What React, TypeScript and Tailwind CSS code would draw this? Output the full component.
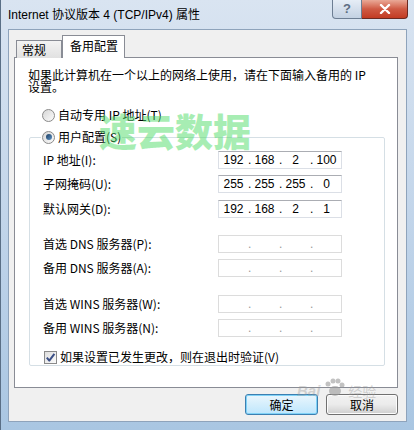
import React from 'react';

const FONT = { fontFamily: '"Liberation Sans", "Noto Sans CJK SC", sans-serif' };
const CJK = { fontFamily: '"Noto Sans CJK SC", "Liberation Sans", sans-serif' };

const rows = [
  { label: 'IP 地址(I):', ip: ['192', '168', '2', '100'], mt: 'mt-[7px]' },
  { label: '子网掩码(U):', ip: ['255', '255', '255', '0'], mt: 'mt-[6px]' },
  { label: '默认网关(D):', ip: ['192', '168', '2', '1'], mt: 'mt-[7px]' },
  { label: '首选 DNS 服务器(P):', ip: null, mt: 'mt-[17px]' },
  { label: '备用 DNS 服务器(A):', ip: null, mt: 'mt-[6px]' },
  { label: '首选 WINS 服务器(W):', ip: null, mt: 'mt-[18px]' },
  { label: '备用 WINS 服务器(N):', ip: null, mt: 'mt-[6px]' },
];

function Radio({ on }: { on?: boolean }) {
  return (
    <span className="w-[13px] h-[13px] rounded-full border border-[#8a8a8a] bg-gradient-to-br from-[#d6d6d6] to-[#fbfbfb] flex items-center justify-center flex-shrink-0">
      {on && <span className="w-[6px] h-[6px] rounded-full bg-gradient-to-br from-[#1d3f63] to-[#5e93c6]" />}
    </span>
  );
}

function IpBox({ ip }: { ip: string[] | null }) {
  const parts = ip ?? ['', '', '', ''];
  return (
    <div
      className={`w-[124px] h-[18px] flex items-center bg-white border ${ip ? 'border-[#dbdfe6] border-t-[#abadb3] text-black' : 'border-[#dcdcdc] text-[#9a9a9a]'} text-[12px] leading-none`}
      style={FONT}
    >
      {parts.map((p, i) => (
        <React.Fragment key={i}>
          <span className="w-[29px] text-center">{p}</span>
          {i < 3 && <span className="w-[2px] text-center">.</span>}
        </React.Fragment>
      ))}
    </div>
  );
}

export default function App() {
  return (
    <div className="relative w-[414px] h-[430px] overflow-hidden bg-gradient-to-b from-[#d9e4f1] via-[#c2d5ea] to-[#a9c6e2] border-l border-[#5a6f86]" style={FONT}>
      {/* title bar */}
      <div className="h-[29px] flex items-start">
        <p className="pl-[7px] pt-[7px] text-[12px] text-black leading-[16px]">Internet 协议版本 4 (TCP/IPv4) 属性</p>
        <div className="ml-auto mr-[6px] flex">
          <div className="w-[30px] h-[19px] rounded-bl-[4px] border border-t-0 border-[#6d7e93] bg-gradient-to-b from-[#e6edf6] to-[#c3d1e2] flex items-center justify-center text-[13px] font-bold text-[#5d6d82]">?</div>
          <div className="w-[46px] h-[19px] rounded-br-[4px] border border-l-0 border-t-0 border-[#6b2a22] bg-gradient-to-b from-[#e9a997] via-[#cf5a44] to-[#c23b22] flex items-center justify-center">
            <svg width="12" height="10" viewBox="0 0 12 10">
              <path d="M2 1 L10 9 M10 1 L2 9" stroke="white" strokeWidth="2.4" strokeLinecap="round" />
            </svg>
          </div>
        </div>
      </div>

      {/* dialog body */}
      <div className="ml-[7px] w-[399px] h-[393px] bg-[#f0f0f0] border border-[#8ea3bb]">
        {/* tabs */}
        <div className="flex items-end h-[27px] pl-[7px]">
          <div className="w-[46px] h-[18px] border border-b-0 border-[#898c95] bg-gradient-to-b from-[#f3f3f3] to-[#e1e1e1] text-[12px] leading-[18px] pl-[5px] mb-[-1px]" style={CJK}>常规</div>
          <div className="relative z-10 w-[63px] h-[23px] border border-b-0 border-[#898c95] bg-white text-[12px] leading-[20px] pl-[7px] mb-[-1px]" style={CJK}>备用配置</div>
        </div>

        {/* panel */}
        <div className="ml-[5px] w-[384px] h-[331px] border border-[#898c95] bg-white text-[12px] text-black" style={CJK}>
          <p className="ml-[13px] mt-[11px] leading-[12px]">
            如果此计算机在一个以上的网络上使用，请在下面输入备用的 IP<br />设置。
          </p>

          <div className="ml-[27px] mt-[15px] h-[14px] flex items-center gap-[3px]">
            <Radio />
            <span>自动专用 IP 地址(T)</span>
          </div>

          <fieldset className="ml-[14px] mt-[8px] w-[356px] h-[236px] border border-[#d5dfe5] rounded-[2px]">
            <legend className="ml-[11px] px-[1px] h-[14px]">
              <span className="flex items-center gap-[3px] h-[14px] bg-white">
                <Radio on />
                <span>用户配置(S)</span>
              </span>
            </legend>
            {rows.map((r) => (
              <div key={r.label} className={`${r.mt} flex items-center h-[18px] pl-[13px]`}>
                <span className="w-[175px] whitespace-nowrap">{r.label}</span>
                <IpBox ip={r.ip} />
              </div>
            ))}
            <div className="mt-[13px] flex items-center h-[14px] pl-[14px] gap-[3px]">
              <span className="w-[13px] h-[13px] border border-[#8a8a8a] bg-gradient-to-br from-[#dedede] to-[#fbfbfb] flex items-center justify-center flex-shrink-0">
                <svg width="11" height="11" viewBox="0 0 11 11">
                  <path d="M1.8 5.6 L4.3 8.6 L9.4 1.8" stroke="#3b4f86" strokeWidth="2" fill="none" strokeLinejoin="round" />
                </svg>
              </span>
              <span>如果设置已发生更改，则在退出时验证(V)</span>
            </div>
          </fieldset>
        </div>

        {/* buttons */}
        <div className="mt-[6px] flex justify-end gap-[8px] pr-[8px]">
          <button className="w-[73px] h-[21px] rounded-[3px] border border-[#3c7fb1] bg-gradient-to-b from-[#eaf6fd] via-[#d4eefc] to-[#bee6fd] shadow-[inset_0_0_0_1px_#7fd2f7] text-[12px] text-black" style={CJK}>确定</button>
          <button className="w-[72px] h-[21px] rounded-[3px] border border-[#707070] bg-gradient-to-b from-[#f2f2f2] via-[#ebebeb] to-[#cfcfcf] shadow-[inset_0_0_0_1px_#fcfcfc] text-[12px] text-black" style={CJK}>取消</button>
        </div>
      </div>

      {/* watermarks */}
      <div className="pointer-events-none absolute left-[98px] top-[111px] text-[38px] font-black leading-none text-[#4fdc68]/50" style={CJK}>速云数据</div>
      <div className="pointer-events-none absolute left-[296px] top-[378px] flex items-end gap-[2px] text-[#9a9a9a]/40" style={FONT}>
        <span className="text-[15px] font-bold italic leading-none">Bai</span>
        <svg width="24" height="20" viewBox="0 0 24 20" className="opacity-60">
          <circle cx="6" cy="6" r="2.5" fill="#9a9a9a" />
          <circle cx="11" cy="3" r="2.5" fill="#9a9a9a" />
          <circle cx="16" cy="3" r="2.5" fill="#9a9a9a" />
          <circle cx="20" cy="7" r="2.5" fill="#9a9a9a" />
          <ellipse cx="13" cy="13" rx="6" ry="5" fill="#9a9a9a" />
        </svg>
        <span className="text-[14px] leading-none" style={CJK}>经验</span>
      </div>
    </div>
  );
}
